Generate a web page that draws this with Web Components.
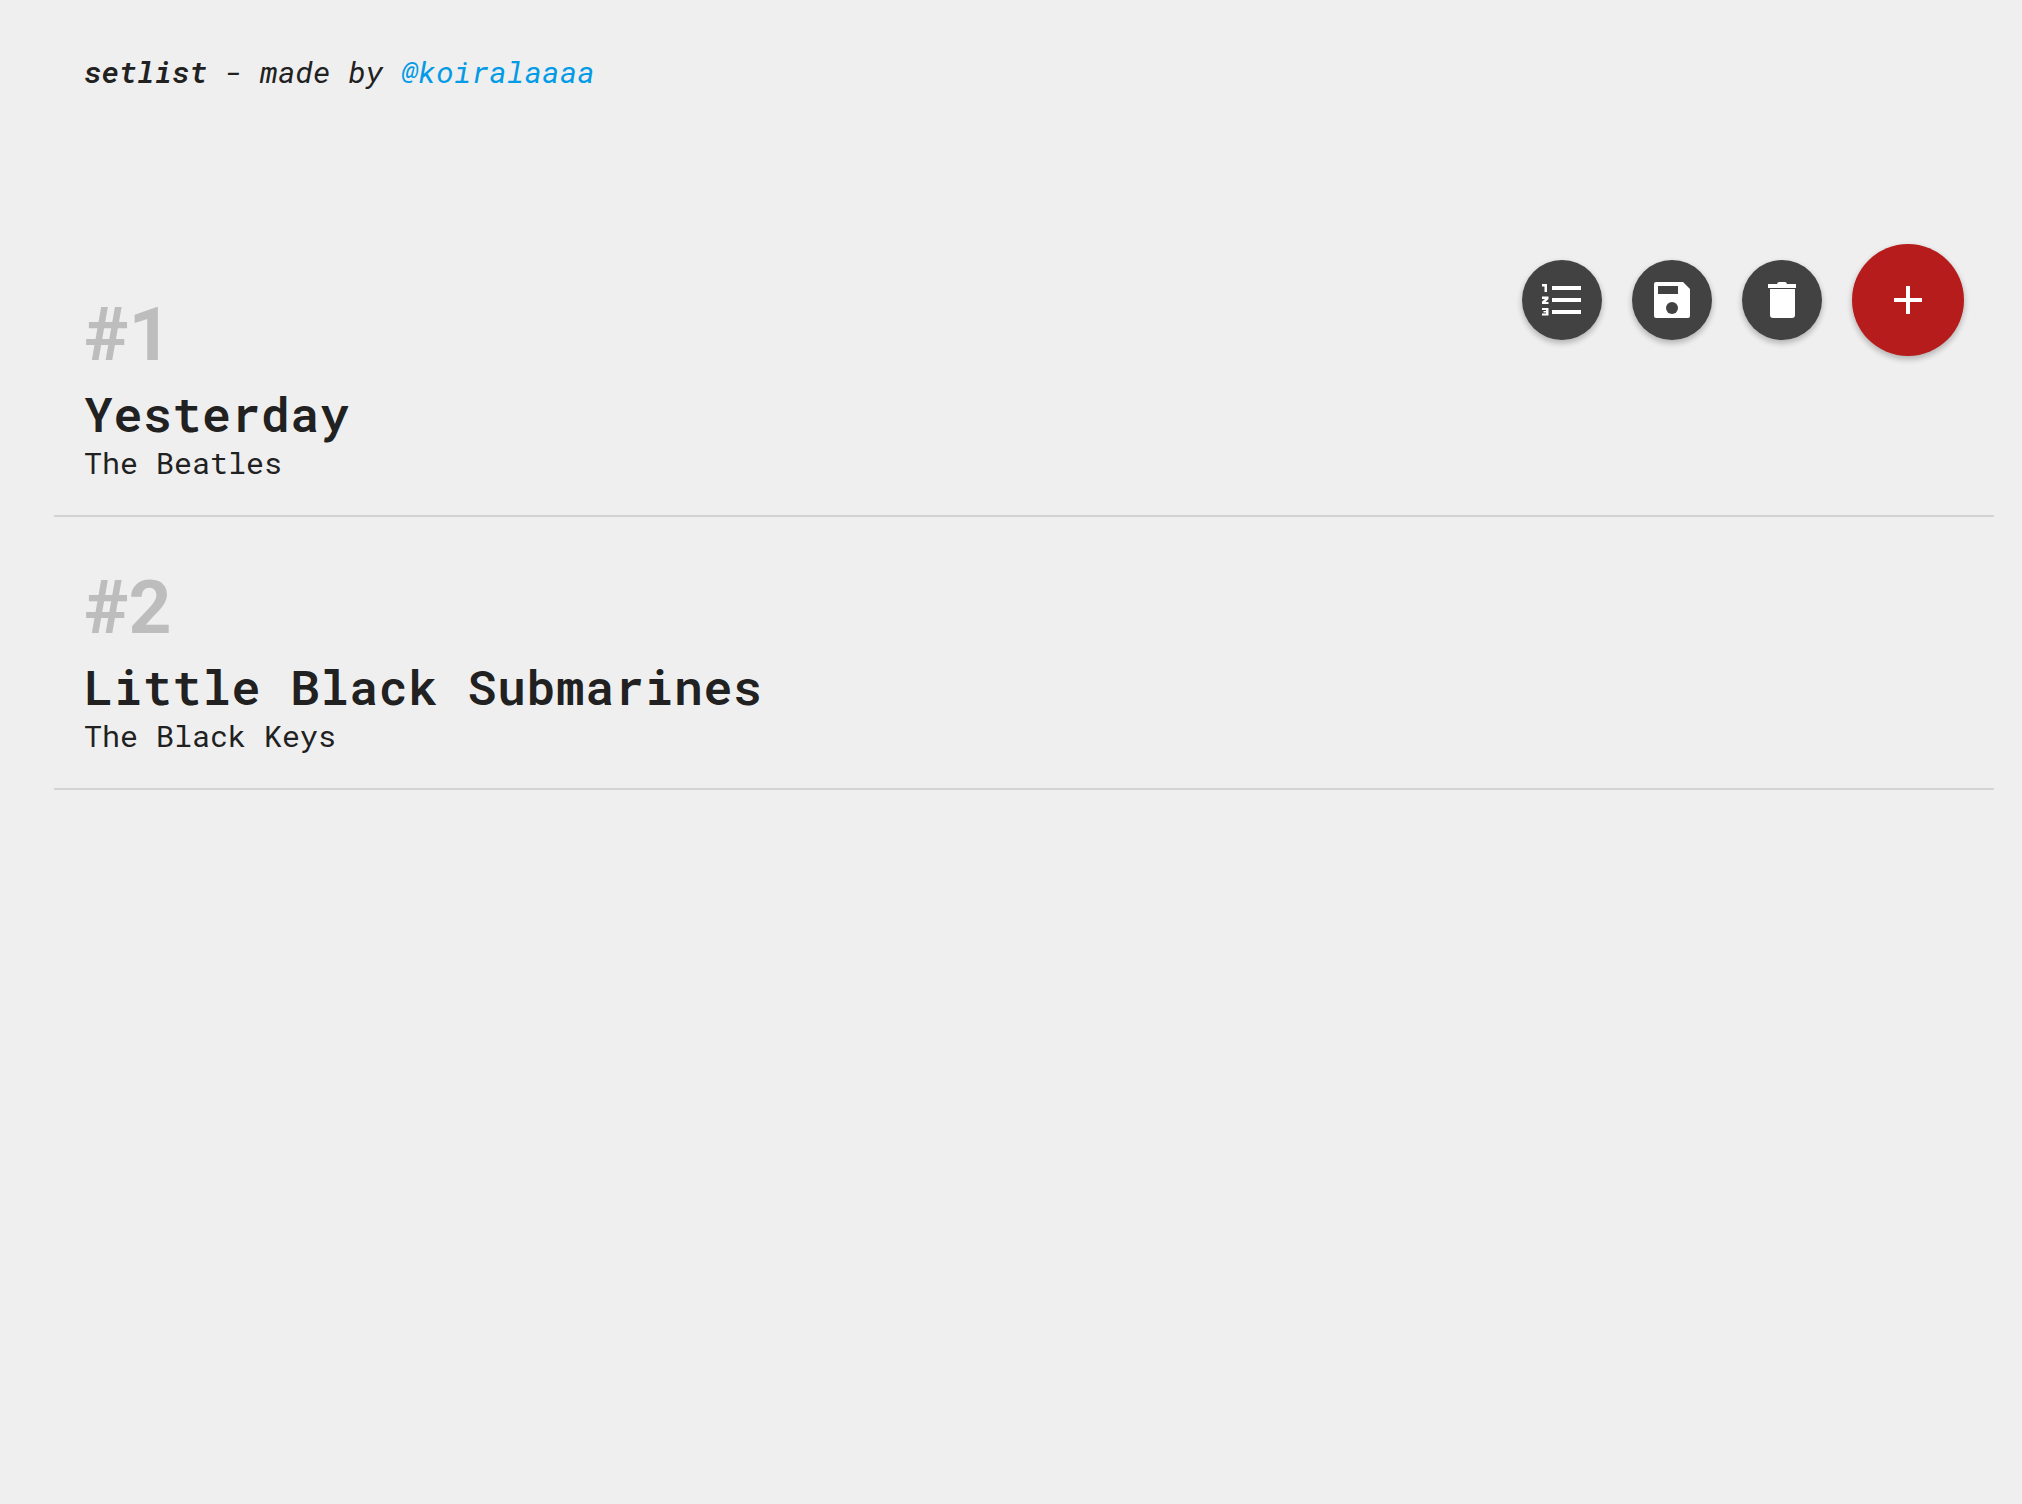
<!DOCTYPE html>
<html><head><meta charset="utf-8"><title>setlist</title>
<style>
html,body{margin:0;height:100%;background:#efefef}
body{font-family:"Roboto Mono","DejaVu Sans Mono","Liberation Mono",monospace;color:#212121}
</style></head><body>
<setlist-app>
<setlist-header slot="header"><b>setlist</b> - made by <a href="#">@koiralaaaa</a></setlist-header>
<fab-bar slot="fabs">
<fab-btn label="list"><svg viewBox="0 0 40 36" width="40" height="36" fill="#fff"><rect x="10" y="4" width="29" height="4"/><rect x="10" y="16" width="29" height="4"/><rect x="10" y="28" width="29" height="4"/><path d="M0 2h5v8H2.500V4.500H0z"/><path d="M0 14.500h6.500v2.500L3.500 20h3v2H0v-2.500L3 17H0z"/><path d="M0 26h6.500v7.500H0v-2h4v-1H1.500v-1.500H4v-1H0z"/></svg></fab-btn>
<fab-btn label="save"><svg viewBox="0 0 36 36" width="36" height="36"><path fill="#fff" d="M2 0h27l7 7v27a2 2 0 0 1-2 2H2a2 2 0 0 1-2-2V2a2 2 0 0 1 2-2z"/><rect x="4" y="4" width="20" height="8" fill="#424242"/><circle cx="18" cy="26" r="6" fill="#424242"/></svg></fab-btn>
<fab-btn label="delete"><svg viewBox="0 0 28 36" width="28" height="36" fill="#fff"><path d="M9 2q.5-2 2-2h6q1.500 0 2 2h9v4H0V2z"/><path d="M2 7h25v26a3 3 0 0 1-3 3H5a3 3 0 0 1-3-3z"/></svg></fab-btn>
<fab-btn big label="add"><svg viewBox="0 0 28 28" width="28" height="28" fill="#fff"><rect x="12" width="4" height="28"/><rect y="12" width="28" height="4"/></svg></fab-btn>
</fab-bar>
<song-row rank="#1" title="Yesterday" artist="The Beatles"></song-row>
<song-row rank="#2" title="Little Black Submarines" artist="The Black Keys"></song-row>
</setlist-app>
<script>
function def(name,html,init){customElements.define(name,class extends HTMLElement{constructor(){super();this.attachShadow({mode:'open'}).innerHTML=html;}connectedCallback(){init&&init(this)}})}
def('setlist-app',`<style>:host{display:block;position:relative;min-height:1504px;box-sizing:border-box;padding-bottom:1px}
.top{height:244px}</style><div class="top"><slot name="header"></slot></div><slot name="fabs"></slot><slot></slot>`);
def('setlist-header',`<style>:host{display:block;padding:51px 84px 0;font-size:30px;line-height:42px;font-style:italic;font-weight:380}
::slotted(a){color:#039be5;text-decoration:none}::slotted(b){font-weight:650}</style><slot></slot>`);
def('fab-bar',`<style>:host{position:absolute;top:244px;right:58px;display:flex;align-items:center;gap:30px}</style><slot></slot>`);
def('fab-btn',`<style>:host{display:flex;align-items:center;justify-content:center;width:80px;height:80px;border-radius:50%;background:#424242;box-shadow:0 3px 6px rgba(0,0,0,.16),0 3px 6px rgba(0,0,0,.12)}
:host([big]){width:112px;height:112px;background:#b71c1c}
::slotted(svg){display:block}</style><slot></slot>`);
def('song-row',`<style>:host{display:block;margin:0 28px 0 54px;padding:48px 30px 0;border-bottom:2px solid #d3d3d3;height:223px}
.r{font:700 75px/84px Roboto,sans-serif;color:#bdbdbd}
.t{font-size:48px;line-height:56px;font-weight:650;margin-top:9.500px;letter-spacing:.7px}
.a{font-size:30px;line-height:36px;margin-top:3px;font-weight:380}</style>
<div class="r"></div><div class="t"></div><div class="a"></div>`,el=>{const s=el.shadowRoot;s.querySelector('.r').textContent=el.getAttribute('rank');s.querySelector('.t').textContent=el.getAttribute('title');s.querySelector('.a').textContent=el.getAttribute('artist');});
</script>
</body></html>
